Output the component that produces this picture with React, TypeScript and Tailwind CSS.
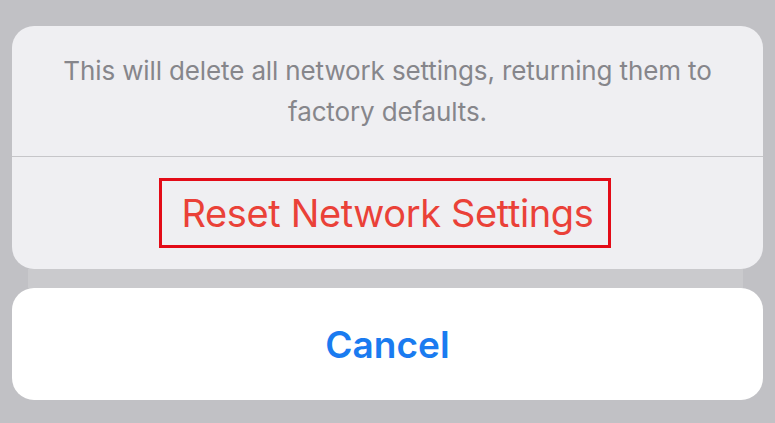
export default function App() {
  return (
    <div className="h-[423px] w-[775px] overflow-hidden bg-[#c1c1c5] px-3 pt-[26px] font-['Inter',sans-serif]">
      <div className="flex h-[243px] flex-col rounded-[22px] bg-[#efeff2]">
        <p className="px-10 pt-6 pb-6 text-center text-[26px] leading-[41px] tracking-[-0.005em] text-[#86868b]">
          This will delete all network settings, returning them to factory
          defaults.
        </p>
        <div className="h-px bg-[#c6c6c9]" />
        <div className="flex flex-1 items-center justify-center">
          <div className="mr-[6px] flex h-[70px] w-[452px] items-center justify-center border-[3px] border-[#e30b17] pl-[6px]">
            <span className="text-[38px] leading-none tracking-[-0.01em] text-[#ea4138]">
              Reset Network Settings
            </span>
          </div>
        </div>
      </div>
      <div className="mx-4 mr-5 h-[19px] bg-[#cacacd]" />
      <div className="flex h-[112px] items-center justify-center rounded-[22px] bg-white">
        <span className="text-[37px] font-semibold leading-none text-[#1a7bf0]">
          Cancel
        </span>
      </div>
    </div>
  );
}
